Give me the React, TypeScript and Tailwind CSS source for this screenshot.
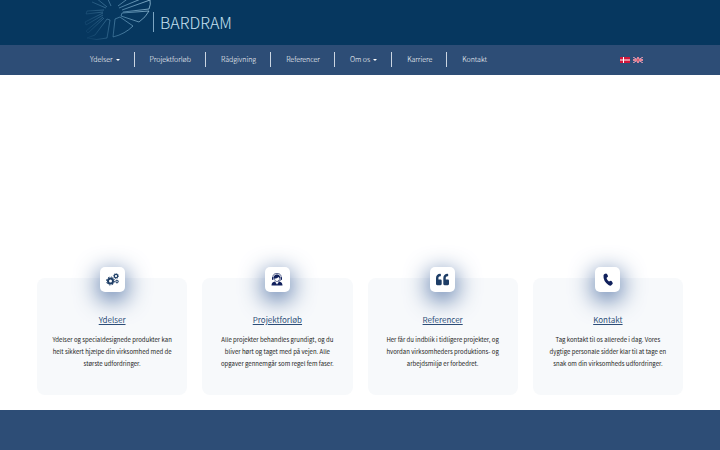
import React from 'react';
import { FaQuoteLeft } from 'react-icons/fa';

interface NavItem {
  label: string;
  hasMenu?: boolean;
}

interface Service {
  title: string;
  text: string;
  icon: React.ReactNode;
}

const NAV_ITEMS: NavItem[] = [
  { label: 'Ydelser', hasMenu: true },
  { label: 'Projektforløb' },
  { label: 'Rådgivning' },
  { label: 'Referencer' },
  { label: 'Om os', hasMenu: true },
  { label: 'Karriere' },
  { label: 'Kontakt' },
];

const GearsIcon = () => (
  <svg viewBox="0 0 26 26" className="h-[13px] w-[13px] text-[#1d3d66]" fill="none" stroke="currentColor" aria-hidden="true">
    <circle cx="9" cy="16" r="5" strokeWidth="4" />
    <circle cx="9" cy="16" r="8" strokeWidth="2" strokeDasharray="3.14" />
    <circle cx="20" cy="6" r="3.5" strokeWidth="2.500" />
    <circle cx="20" cy="6" r="5.2" strokeWidth="1.4" strokeDasharray="2.04" />
    <circle cx="22" cy="17" r="2.2" strokeWidth="2" />
    <circle cx="22" cy="17" r="3.600" strokeWidth="1" strokeDasharray="1.41" />
  </svg>
);

const SupportIcon = () => (
  <svg viewBox="0 0 24 26" className="h-[13px] w-3" fill="currentColor" aria-hidden="true">
    <path d="M4 10C3 3 7 1 12 1s9 2 8 9" fill="none" stroke="currentColor" strokeWidth="1.4" />
    <path d="M6 12C5 5 8 3 12 3s7 2 6 9c-1-2-2-3-3-4-2 2-5 3-8 3z" />
    <rect x="2" y="8" width="3" height="6" rx="1.5" />
    <rect x="19" y="8" width="3" height="6" rx="1.5" />
    <path d="M7 11c0 4 2 6 5 6s5-2 5-6" fill="none" stroke="currentColor" strokeWidth="1.2" />
    <path d="M20 13c0 2-2 3-6 3" fill="none" stroke="currentColor" strokeWidth="1.2" />
    <path d="M1 25c0-5 2-7 7-8l4 6 4-6c5 1 7 3 7 8z" />
  </svg>
);

const PhoneIcon = () => (
  <svg viewBox="0 0 20 26" className="h-[13px] w-2.5" fill="currentColor" aria-hidden="true">
    <path d="M3 2 6 1Q7 1 8 2L10 6Q10 8 9 8L7 10Q8 14 12 17L14 16Q15 15 17 16L19 19Q20 21 19 22L16 25Q14 26 11 24 0 16 1 5 1 3 3 2Z" />
  </svg>
);

const SERVICES: Service[] = [
  {
    title: 'Ydelser',
    text: 'Ydelser og specialdesignede produkter kan helt sikkert hjælpe din virksomhed med de største udfordringer.',
    icon: <GearsIcon />,
  },
  {
    title: 'Projektforløb',
    text: 'Alle projekter behandles grundigt, og du bliver hørt og taget med på vejen. Alle opgaver gennemgår som regel fem faser.',
    icon: <SupportIcon />,
  },
  {
    title: 'Referencer',
    text: 'Her får du indblik i tidligere projekter, og hvordan virksomheders produktions- og arbejdsmiljø er forbedret.',
    icon: <FaQuoteLeft className="h-[13px] w-[13px] text-[#1d3d66]" />,
  },
  {
    title: 'Kontakt',
    text: 'Tag kontakt til os allerede i dag. Vores dygtige personale sidder klar til at tage en snak om din virksomheds udfordringer.',
    icon: <PhoneIcon />,
  },
];

const Logo = () => (
  <svg viewBox="0 0 70 41" className="h-[41px] w-[70px]" fill="none" strokeWidth="0.8" aria-hidden="true">
    <defs>
      <linearGradient id="fan" gradientUnits="userSpaceOnUse" x1="2" y1="26" x2="68" y2="4">
        <stop offset="0" stopColor="#5f9cc0" stopOpacity="0.1" />
        <stop offset="0.5" stopColor="#6fa6c8" stopOpacity="0.7" />
        <stop offset="1" stopColor="#9cc6de" />
      </linearGradient>
    </defs>
    <g stroke="url(#fan)">
      <path d="M36 6 48 -3M37 8 66 -4" />
      <path d="M40 10 68 0Q69 4 67 9L41 12" />
      <path d="M40 13 67 11Q64 17 57 22L39 16Z" />
      <path d="M33 19 38 17 51 26Q43 34 31 37Z" />
      <path d="M25 19 28 20 25 38Q14 41 5 38L13 35Z" />
      <path d="M22 18 6 33 4 31 21 17" />
      <path d="M21 15 4 25 3 22 21 13" />
      <path d="M21 12 4 14 5 11 22 10" />
      <path d="M24 8 10 2M25 7 14 -2M29 6 25 -3" />
    </g>
  </svg>
);

const DanishFlag = () => (
  <svg viewBox="0 0 20 12" className="h-1.5 w-2.5" aria-hidden="true">
    <path fill="#d0153a" d="M0 0h20v12H0z" />
    <path fill="#fff" d="M6 0h2v12H6zM0 5h20v2H0z" />
  </svg>
);

const BritishFlag = () => (
  <svg viewBox="0 0 20 12" className="h-1.5 w-2.5" aria-hidden="true">
    <path fill="#29477e" d="M0 0h20v12H0z" />
    <path stroke="#e3dce6" strokeWidth="2" d="m0 0 20 12M20 0 0 12" />
    <path stroke="#d8304a" strokeWidth="0.8" d="m0 0 20 12M20 0 0 12" />
    <path fill="#e3dce6" d="M8 0h4v12H8zM0 4h20v4H0z" />
    <path fill="#d8304a" d="M9 0h2v12H9zM0 5h20v2H0z" />
  </svg>
);

const ServiceCard: React.FC<{ service: Service }> = ({ service }) => (
  <article className="flex min-h-[117px] flex-col items-center rounded-lg bg-[#f7f9fb] px-[13px] text-center">
    <div className="-mt-[11px] flex h-[25px] w-[25px] shrink-0 items-center justify-center rounded-[5px] bg-white text-[#10205c] shadow-[0_6px_25px_#2d5592]">
      {service.icon}
    </div>
    <h2 className="mt-5 text-[8px] leading-4 text-[#2d4e78]">
      <a href="#" className="underline">{service.title}</a>
    </h2>
    <p className="mt-[6px] text-[6px] leading-3 text-[#222]">{service.text}</p>
  </article>
);

const App: React.FC = () => {
  return (
    <div className="flex min-h-screen flex-col bg-white font-['Noto_Sans_CJK_SC','Noto_Sans',sans-serif]">
      <header>
        <div className="h-[45px] overflow-hidden bg-[#06375f] pl-[82px]">
          <a href="#" className="flex items-start text-[#c5e0f0]">
            <Logo />
            <span className="mt-3 ml-px flex h-5 items-center border-l border-[#7ca5c2] pl-1.5 text-[16px] leading-5 font-light">
              BARDRAM
            </span>
          </a>
        </div>
        <div className="flex h-[30px] justify-between bg-[#2d4d76] pr-[77px] pl-[75px]">
          <nav className="flex pt-[7px]">
            {NAV_ITEMS.map((item, i) => (
              <a
                key={item.label}
                href="#"
                className={`flex h-[15px] items-center pr-[14px] pl-[15px] text-[7px] leading-[15px] font-light text-white ${i > 0 ? 'border-l border-[#cbd5e1]' : ''}`}
              >
                {item.label}
                {item.hasMenu && (
                  <svg viewBox="0 0 4 2" className="ml-[3px] h-0.5 w-1" fill="currentColor" aria-hidden="true">
                    <path d="M0 0h4L2 2z" />
                  </svg>
                )}
              </a>
            ))}
          </nav>
          <div className="flex items-center gap-[3px]">
            <a href="#" aria-label="Dansk"><DanishFlag /></a>
            <a href="#" aria-label="English"><BritishFlag /></a>
          </div>
        </div>
      </header>

      <main className="px-[37px] pt-[203px] pb-[15px]">
        <section className="grid grid-cols-4 gap-[15px]">
          {SERVICES.map(service => (
            <ServiceCard key={service.title} service={service} />
          ))}
        </section>
      </main>

      <footer className="min-h-10 flex-1 bg-[#2d4d76]" />
    </div>
  );
};

export default App;
